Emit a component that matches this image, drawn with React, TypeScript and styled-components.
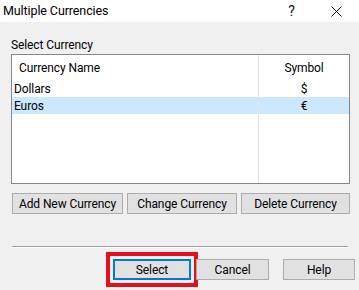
import styled, { createGlobalStyle } from "styled-components";

const Global = createGlobalStyle`
  html, body {
    margin: 0;
    padding: 0;
    background: #f0f0f0;
  }
  body {
    font-family: Roboto, "Noto Sans", sans-serif;
    font-size: 12px;
    letter-spacing: -0.1px;
    color: #000;
  }
`;

const Window = styled.div`
  width: 359px;
  height: 290px;
  overflow: hidden;
  background: #f0f0f0;
  display: flex;
  flex-direction: column;
`;

const TitleBar = styled.div`
  height: 22px;
  background: #ffffff;
  display: flex;
  align-items: center;
  padding-left: 3px;
`;

const Title = styled.div`
  flex: 1;
  line-height: 22px;
  font-size: 12.5px;
`;

const TitleButton = styled.div`
  width: 45px;
  height: 22px;
  display: flex;
  align-items: center;
  justify-content: center;
  font-size: 14px;
  color: #111;
`;

const Body = styled.div`
  display: flex;
  flex-direction: column;
  padding: 15px 0 0 0;
`;

const GroupLabel = styled.div`
  margin-left: 11px;
  line-height: 16px;
  height: 17px;
`;

const ListBox = styled.div`
  margin-left: 11px;
  width: 339px;
  height: 130px;
  box-sizing: border-box;
  border: 1px solid #828790;
  background: #ffffff;
  display: flex;
  flex-direction: column;
`;

const Row = styled.div<{ selected?: boolean; head?: boolean; fill?: boolean }>`
  display: grid;
  grid-template-columns: 1fr 91px;
  height: ${({ head }) => (head ? "25px" : "17px")};
  flex: ${({ fill }) => (fill ? "1" : "none")};
  background: ${({ selected }) => (selected ? "#cce8ff" : "transparent")};
  align-items: stretch;
`;

const NameCell = styled.div<{ head?: boolean }>`
  padding-left: ${({ head }) => (head ? "7px" : "2px")};
  display: flex;
  align-items: center;
`;

const SymbolCell = styled.div`
  border-left: 1px solid #e5e5e5;
  display: flex;
  align-items: center;
  justify-content: center;
`;

const ActionRow = styled.div`
  display: flex;
  margin: 9px 0 0 12px;
  gap: 4px;
`;

const Button = styled.button<{ w: number; primary?: boolean }>`
  width: ${({ w }) => w}px;
  height: 21px;
  box-sizing: border-box;
  padding: 0;
  font-family: inherit;
  font-size: 12px;
  letter-spacing: -0.1px;
  color: #000;
  background: #e1e1e1;
  border: ${({ primary }) => (primary ? "2px solid #0078d7" : "1px solid #adadad")};
  border-radius: 0;
`;

const Separator = styled.div`
  margin: 32px 11px 0 12px;
  height: 1px;
  background: #a0a0a0;
  border-bottom: 1px solid #ffffff;
`;

const FooterRow = styled.div`
  display: flex;
  margin: 11px 0 0 113px;
  gap: 5px;
`;

const Highlight = styled.div`
  outline: 4px solid #e3101b;
  outline-offset: 3px;
  display: flex;
`;

const HelpGap = styled.div`
  width: 4px;
`;

const CloseIcon = () => (
  <svg width="11" height="11" viewBox="0 0 11 11">
    <path d="M0.5 0.5 L10.5 10.5 M10.5 0.5 L0.5 10.5" stroke="#111" strokeWidth="1" />
  </svg>
);

export default function App() {
  return (
    <>
      <Global />
      <Window>
        <TitleBar>
          <Title>Multiple Currencies</Title>
          <TitleButton>?</TitleButton>
          <TitleButton>
            <CloseIcon />
          </TitleButton>
        </TitleBar>
        <Body>
          <GroupLabel>Select Currency</GroupLabel>
          <ListBox>
            <Row head>
              <NameCell head>Currency Name</NameCell>
              <SymbolCell>Symbol</SymbolCell>
            </Row>
            <Row>
              <NameCell>Dollars</NameCell>
              <SymbolCell>$</SymbolCell>
            </Row>
            <Row selected>
              <NameCell>Euros</NameCell>
              <SymbolCell>€</SymbolCell>
            </Row>
            <Row fill>
              <NameCell />
              <SymbolCell />
            </Row>
          </ListBox>
          <ActionRow>
            <Button w={111}>Add New Currency</Button>
            <Button w={110}>Change Currency</Button>
            <Button w={109}>Delete Currency</Button>
          </ActionRow>
          <Separator />
          <FooterRow>
            <Highlight>
              <Button w={78} primary>
                Select
              </Button>
            </Highlight>
            <Button w={73}>Cancel</Button>
            <HelpGap />
            <Button w={72}>Help</Button>
          </FooterRow>
        </Body>
      </Window>
    </>
  );
}
